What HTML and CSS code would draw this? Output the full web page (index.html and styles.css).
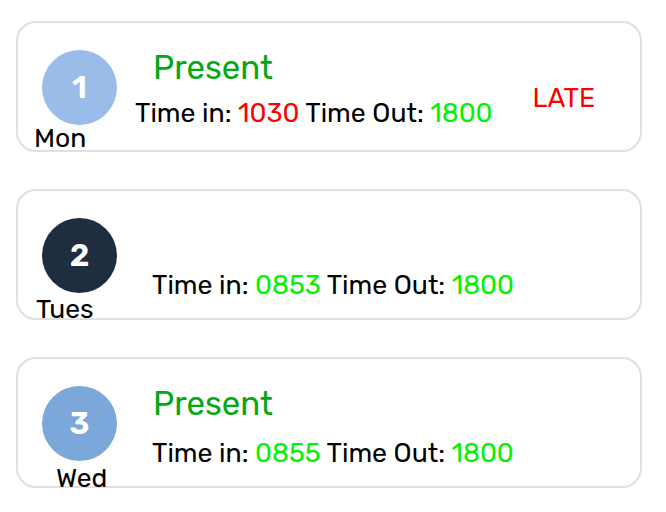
FILE: index.html
```html
<!DOCTYPE html>
<html>
<head>
<meta charset="utf-8">
<link rel="stylesheet" href="styles.css">
</head>
<body>
<div class="list">
  <div class="card">
    <div class="day">
      <div class="circle circle-light">1</div>
      <div class="day-label label-mon">Mon</div>
    </div>
    <div class="info">
      <div class="status">Present</div>
      <div class="row row-late">
        <div class="times">Time in: <span class="red">1030</span> Time Out: <span class="green">1800</span></div>
        <div class="late">LATE</div>
      </div>
    </div>
  </div>
  <div class="card">
    <div class="day">
      <div class="circle circle-dark">2</div>
      <div class="day-label label-tues">Tues</div>
    </div>
    <div class="info">
      <div class="status"></div>
      <div class="row">
        <div class="times">Time in: <span class="green">0853</span> Time Out: <span class="green">1800</span></div>
      </div>
    </div>
  </div>
  <div class="card">
    <div class="day">
      <div class="circle circle-mid">3</div>
      <div class="day-label label-wed">Wed</div>
    </div>
    <div class="info">
      <div class="status">Present</div>
      <div class="row">
        <div class="times">Time in: <span class="green">0855</span> Time Out: <span class="green">1800</span></div>
      </div>
    </div>
  </div>
</div>
</body>
</html>
```
FILE: styles.css
```css
* { box-sizing: border-box; }
body {
  margin: 0;
  background: #ffffff;
  font-family: Rubik, Roboto, "Noto Sans", sans-serif;
  color: #000;
}
.list {
  display: flex;
  flex-direction: column;
  gap: 37px;
  padding: 21px 0 0 16px;
}
.card {
  width: 626px;
  height: 131px;
  flex-shrink: 0;
  border: 2px solid #e0e0e0;
  border-radius: 20px;
  display: flex;
  padding: 27px 0 0 24px;
}
.day {
  width: 75px;
  display: flex;
  flex-direction: column;
  flex-shrink: 0;
}
.circle {
  width: 75px;
  height: 75px;
  flex-shrink: 0;
  border-radius: 50%;
  display: flex;
  align-items: center;
  justify-content: center;
  color: #fff;
  font-weight: 600;
  font-size: 31px;
  line-height: 31px;
}
.circle-light { background: #99bde8; }
.circle-dark { background: #1e2d40; }
.circle-mid { background: #7ba7da; }
.day-label {
  font-size: 26.5px;
  line-height: 26px;
  white-space: nowrap;
  flex-shrink: 0;
}
.label-mon { margin-left: -8px; margin-top: 0; }
.label-tues { margin-left: -6px; margin-top: 3px; }
.label-wed { margin-left: 14px; margin-top: 4px; }
.info {
  margin-left: 36px;
  display: flex;
  flex-direction: column;
}
.status {
  height: 33px;
  margin-top: 1px;
  font-size: 33px;
  line-height: 33px;
  color: #05a815;
}
.row {
  display: flex;
  align-items: flex-end;
  margin-top: 20px;
  margin-left: -1px;
}
.row-late {
  margin-top: 1px;
  margin-left: -18px;
}
.times {
  font-size: 26.7px;
  line-height: 26px;
  white-space: nowrap;
}
.late {
  font-size: 26.7px;
  line-height: 26px;
  color: #ff0000;
  margin-left: 40px;
  margin-bottom: 15px;
}
.red { color: #ff0000; }
.green { color: #00f200; }
```
